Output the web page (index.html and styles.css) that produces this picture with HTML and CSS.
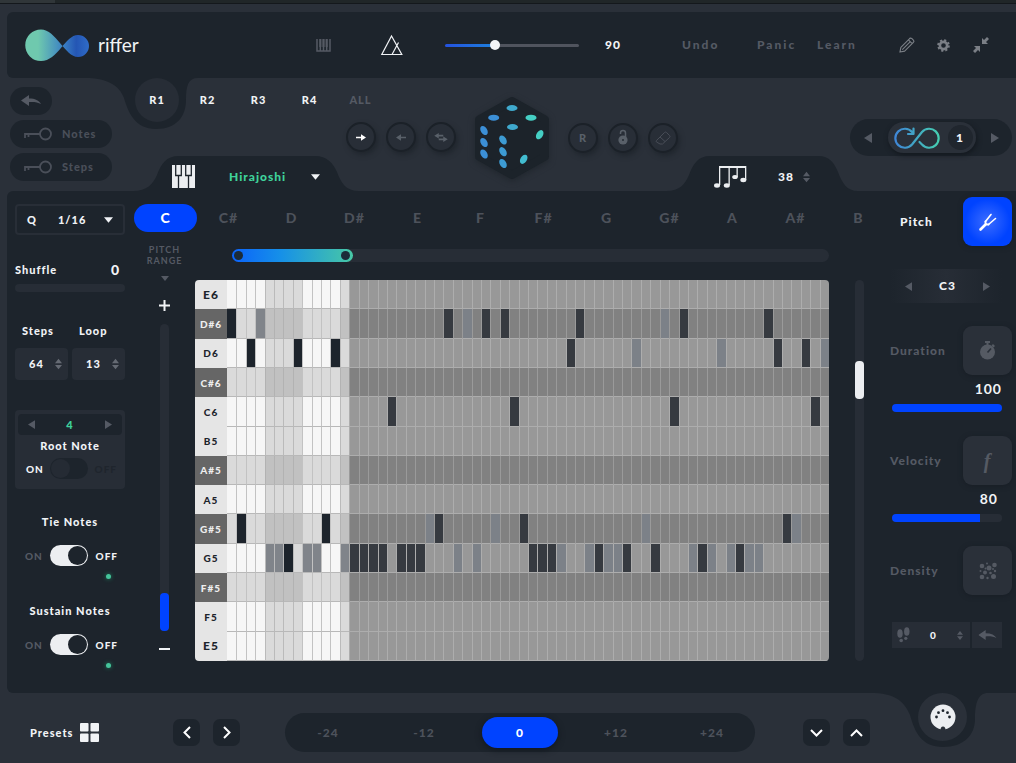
FILE: index.html
```html
<!DOCTYPE html>
<html lang="en">
<head>
<meta charset="utf-8">
<title>riffer</title>
<link rel="stylesheet" href="styles.css">
</head>
<body>
<svg class="defs" width="0" height="0" aria-hidden="true">
  <defs>
    <linearGradient id="logoFill" x1="0" x2="1"><stop offset="0.2" stop-color="#6fc9ae"/><stop offset="0.6" stop-color="#3a80c4"/><stop offset="0.8" stop-color="#2456b4"/><stop offset="1" stop-color="#2f6cc8"/></linearGradient>
    <linearGradient id="loopStroke" x1="0" x2="1"><stop offset="0" stop-color="#3f86d6"/><stop offset="1" stop-color="#45cdb0"/></linearGradient>
    <symbol id="tri-left" viewBox="0 0 8 10"><path d="M8 0v10L0 5z"/></symbol>
    <symbol id="tri-right" viewBox="0 0 8 10"><path d="M0 0v10l8-5z"/></symbol>
    <symbol id="tri-down" viewBox="0 0 10 6"><path d="M0 0h10L5 6z"/></symbol>
    <symbol id="updown" viewBox="0 0 8 12"><path d="M0 5h8L4 0zM0 7h8l-4 5z"/></symbol>
    <symbol id="undo" viewBox="0 0 20 12"><path d="M0 5.500 8 0v3.500c6 0 10 2 12 5.500-3-1.800-7-2.300-12-2V11z"/></symbol>
    <symbol id="key" viewBox="0 0 28 14"><g fill="none" stroke="currentColor" stroke-width="1.800"><circle cx="21.500" cy="7" r="5.500"/><path d="M16 7H1v4M4.500 7v3"/></g></symbol>
  </defs>
</svg>

<div class="strip"><span class="strip-tab"></span></div>

<header class="topbar">
  <div class="brand">
    <svg width="65" height="33" viewBox="0 0 65 33"><path fill="url(#logoFill)" d="M16 .5A15.700 15.700 0 1 0 16 32C33 32 40 6 53 6A11 11 0 0 1 53 28C40 28 31 .5 16 .5z"/></svg>
    <span class="brand-name">riffer</span>
  </div>
  <button class="icon dim" aria-label="Keyboard"><svg width="15" height="13" viewBox="0 0 15 13" fill="none" stroke="currentColor" stroke-width="1.500"><path d="M1 0v12h13V0M4.300 0v12M7.500 0v12M10.700 0v12"/><path stroke-width="2.500" d="M4.300 0v8M7.500 0v8M10.700 0v8" opacity=".7"/></svg></button>
  <button class="icon lit" aria-label="Metronome"><svg width="22" height="21" viewBox="0 0 22 21" fill="none" stroke="currentColor" stroke-width="1.200"><path d="M10.500 1 .8 19.500h20zM11 19.500 17.500 7.500"/></svg></button>
  <input class="tempo" type="range" min="0" max="100" value="36" aria-label="Tempo">
  <output class="tempo-value">90</output>
  <button class="menu">Undo</button>
  <button class="menu">Panic</button>
  <button class="menu">Learn</button>
  <button class="icon tool" aria-label="Edit"><svg width="16" height="16" viewBox="0 0 17 17" fill="none" stroke="currentColor" stroke-width="1.200" stroke-linejoin="round"><path d="m1 16 1-5 9-9q1-1.500 2.500-.5l2 2q1 1-.5 2.500l-9 9zM10 3l4 4M3.500 13.500l8-8"/></svg></button>
  <button class="icon tool" aria-label="Settings"><svg width="13" height="13" viewBox="-7 -7 14 14" fill="none" stroke="currentColor"><circle r="3.900" stroke-width="2.800"/><circle r="5.800" stroke-width="2" stroke-dasharray="2.300 2.255"/></svg></button>
  <button class="icon tool" aria-label="Collapse"><svg width="16" height="16" viewBox="0 0 16 16" fill="currentColor"><path d="M1 9h6v6l-2-2-3 3-2-2 3-3zM15 7H9V1l2 2 3-3 2 2-3 3z"/></svg></button>
</header>

<section class="deck">
  <div class="locks">
    <button class="pill short" aria-label="Back"><svg width="20" height="12" fill="currentColor"><use href="#undo"/></svg></button>
    <button class="pill"><svg width="28" height="14"><use href="#key"/></svg>Notes</button>
    <button class="pill"><svg width="28" height="14"><use href="#key"/></svg>Steps</button>
  </div>

  <div class="deck-left">
    <nav class="riffs">
      <svg class="notch" width="114" height="52" viewBox="0 0 114 52"><path d="M0 0C22 0 34 7 39 20 43 34 50 51 71 51S101 38 101 22C101 8 103 0 113 0z"/></svg>
      <button class="riff on">R1</button><button class="riff">R2</button><button class="riff">R3</button><button class="riff">R4</button><button class="riff all">ALL</button>
    </nav>
    <div class="directions">
      <button class="round lit" aria-label="Forward"><svg width="10" height="7" viewBox="0 0 12 8" fill="currentColor"><path d="M0 3h6V0l6 4-6 4V5H0z"/></svg></button>
      <button class="round" aria-label="Backward"><svg width="10" height="7" viewBox="0 0 12 8" fill="currentColor"><path d="M12 3H6V0L0 4l6 4V5h6z"/></svg></button>
      <button class="round" aria-label="Both ways"><svg width="14" height="9" viewBox="0 0 15 10" fill="currentColor"><path d="M0 3 5 0v2h5v2H5v2zM15 7l-5 3V8H5V6h5V4z"/></svg></button>
    </div>
    <div class="tab scale-tab">
      <svg class="tab-shape" width="226" height="36" viewBox="0 0 226 36"><path d="M0 36V35C14 35 20 28 24 19 28 8 33 0 46 0H182C194 0 200 7 204 16 208 27 213 35 226 35v1z"/></svg>
      <svg width="23" height="23" viewBox="0 0 23 23"><path fill="#eceef1" d="M0 0h23v23H0z"/><path fill="none" stroke="#1d242c" stroke-width="1.300" d="M3.700 0v10.500h5.600V0M13.700 0v10.500h5.600V0M6.500 10.500V23M16.500 10.500V23"/></svg>
      <select class="scale-select" aria-label="Scale"><option>Hirajoshi</option></select>
      <svg class="lit" width="9" height="6" fill="currentColor"><use href="#tri-down"/></svg>
    </div>
  </div>

  <button class="dice" aria-label="Randomize">
    <svg width="74" height="82" viewBox="0 0 74 82">
      <path d="M37 4 70 22.500v37L37 78 4 59.500v-37z" fill="#1c232a" stroke="#1c232a" stroke-width="8" stroke-linejoin="round"/>
      <g fill="#3fa9cd"><ellipse cx="37" cy="11" rx="5.500" ry="3"/><ellipse cx="37.500" cy="30" rx="5.500" ry="3"/><ellipse cx="48.700" cy="62.300" rx="3.200" ry="5" transform="rotate(32 48.700 62.300)" fill="#42bcd0"/></g>
      <g fill="#3c8fd6"><ellipse cx="18.700" cy="20.700" rx="5.500" ry="3"/><ellipse cx="9" cy="33.500" rx="3.200" ry="5" transform="rotate(-32 9 33.500)"/><ellipse cx="9" cy="45.500" rx="3.200" ry="5" transform="rotate(-32 9 45.500)"/><ellipse cx="9" cy="57" rx="3.200" ry="5" transform="rotate(-32 9 57)"/></g>
      <g fill="#3d9bd3"><ellipse cx="28" cy="43" rx="3.200" ry="5" transform="rotate(-32 28 43)"/><ellipse cx="28" cy="54.700" rx="3.200" ry="5" transform="rotate(-32 28 54.700)"/><ellipse cx="28" cy="66.500" rx="3.200" ry="5" transform="rotate(-32 28 66.500)"/></g>
      <g fill="#45cfc4"><ellipse cx="56" cy="20.700" rx="5.500" ry="3"/><ellipse cx="64.700" cy="37.700" rx="3.200" ry="5" transform="rotate(32 64.700 37.700)"/></g>
    </svg>
  </button>

  <div class="deck-right">
    <div class="deck-tools">
      <button class="round">R</button>
      <button class="round" aria-label="Lock"><svg width="10" height="15" viewBox="0 0 10 15"><path d="M2.500 4V3a2.500 2.500 0 0 1 5 0v4" fill="none" stroke="currentColor" stroke-width="1.500"/><circle cx="5" cy="10" r="4.600" fill="currentColor"/><circle cx="5" cy="10" r="1" fill="#262c35"/></svg></button>
      <button class="round faint" aria-label="Erase"><svg width="16" height="14" viewBox="0 0 16 14" fill="none" stroke="currentColor"><path d="M1.500 9.500 9.500 1.500q1-1 2 0l3 3q1 1 0 2l-7 6.500H5l-3.500-2q-.7-.7 0-1.500zM5 6l5 4.500"/></svg></button>
      <div class="looper">
        <button class="icon" aria-label="Previous loop"><svg width="8" height="10" fill="currentColor"><use href="#tri-left"/></svg></button>
        <button class="loop-core"><svg width="46" height="22" viewBox="0 0 46 22" fill="none" stroke="url(#loopStroke)" stroke-width="2.200" stroke-linecap="round" stroke-linejoin="round"><path d="M18 5A9.500 9.500 0 1 0 18 17.500L28 5A9.500 9.500 0 1 1 28 17.500L25.500 15M14 7h5.500V1.500"/></svg><span class="loop-count">1</span></button>
        <button class="icon" aria-label="Next loop"><svg width="8" height="10" fill="currentColor"><use href="#tri-right"/></svg></button>
      </div>
    </div>
    <div class="tab riff-tab">
      <svg class="tab-shape" width="192" height="36" viewBox="0 0 192 36"><path d="M0 36V35C14 35 19 28 23 19 27 8 32 0 44 0H152C164 0 168 7 172 16 176 27 181 35 192 35v1z"/></svg>
      <svg width="33" height="22" viewBox="0 0 33 22" fill="#eceef1"><path d="M5 0h27v2H5zM5 0h1.300v19H5zM14.500 0h1.300v19h-1.300zM22.500 0h1.300v11h-1.300zM31 0h1.300v14H31z"/><ellipse cx="3" cy="19.500" rx="3" ry="2.200"/><ellipse cx="12.800" cy="19.500" rx="3" ry="2.200"/><ellipse cx="21" cy="11" rx="2.800" ry="2"/><ellipse cx="29.300" cy="14" rx="3" ry="2.200"/></svg>
      <span class="riff-count">38</span>
      <button class="icon" aria-label="Change riff length"><svg width="7" height="12" fill="currentColor"><use href="#updown"/></svg></button>
    </div>
  </div>
</section>

<main class="panel">
  <aside class="left">
    <label class="quant">Q<select><option>1/16</option></select><svg width="9" height="6" fill="currentColor"><use href="#tri-down"/></svg></label>
    <div class="shuffle">
      <label for="shuffle">Shuffle</label><output>0</output>
      <input id="shuffle" class="bar" type="range" min="0" max="100" value="0">
    </div>
    <div class="counts">
      <label for="steps">Steps</label><label for="loop">Loop</label>
      <div class="spin"><input id="steps" value="64"><svg width="7" height="12" fill="currentColor"><use href="#updown"/></svg></div>
      <div class="spin"><input id="loop" value="13"><svg width="7" height="12" fill="currentColor"><use href="#updown"/></svg></div>
    </div>
    <div class="root">
      <div class="root-step"><button class="icon" aria-label="Lower"><svg width="7" height="9" fill="currentColor"><use href="#tri-left"/></svg></button><span>4</span><button class="icon" aria-label="Higher"><svg width="7" height="9" fill="currentColor"><use href="#tri-right"/></svg></button></div>
      <label for="root">Root Note</label>
      <div class="switch-row"><span class="small lit">ON</span><input id="root" class="switch muted" type="checkbox"><span class="small faint">OFF</span></div>
    </div>
    <div class="toggle">
      <label for="tie">Tie Notes</label>
      <div class="switch-row"><span class="small">ON</span><input id="tie" class="switch" type="checkbox" checked><span class="small lit">OFF</span></div>
      <i class="led"></i>
    </div>
    <div class="toggle">
      <label for="sustain">Sustain Notes</label>
      <div class="switch-row"><span class="small">ON</span><input id="sustain" class="switch" type="checkbox" checked><span class="small lit">OFF</span></div>
      <i class="led"></i>
    </div>
  </aside>

  <section class="center">
    <div class="roots">
      <button class="on">C</button><button>C#</button><button>D</button><button>D#</button><button>E</button><button>F</button><button>F#</button><button>G</button><button>G#</button><button>A</button><button>A#</button><button>B</button>
    </div>
    <div class="pitch-range">
      <span class="caption">PITCH RANGE</span>
      <svg width="8" height="5" viewBox="0 0 10 6" fill="currentColor"><path d="M0 0h10L5 6z"/></svg>
      <button class="icon lit plus" aria-label="Zoom in"><svg width="11" height="11" viewBox="0 0 11 11" stroke="currentColor" stroke-width="2"><path d="M0 5.500h11M5.500 0v11"/></svg></button>
      <input class="vertical blue" type="range" min="0" max="100" value="0" aria-label="Pitch range">
      <button class="icon lit minus" aria-label="Zoom out"><svg width="11" height="2" viewBox="0 0 11 2" stroke="currentColor" stroke-width="2"><path d="M0 1h11"/></svg></button>
    </div>
    <div class="stage">
      <div class="window">
        <div class="window-fill"></div>
        <input type="range" min="0" max="1000" value="0" aria-label="Loop start">
        <input type="range" min="0" max="1000" value="184" aria-label="Loop end">
      </div>
      <div class="roll" id="roll"></div>
    </div>
    <div class="scroller"><input class="vertical white" type="range" min="0" max="1000" value="764" aria-label="Scroll notes"></div>
  </section>

  <aside class="right">
    <div class="param lit"><span>Pitch</span><button class="tile on" aria-label="Pitch"><svg width="20" height="20" viewBox="0 0 20 20" fill="none" stroke="#fff" stroke-linecap="round"><path stroke-width="1.600" d="M7.500 9.500 13 2.500M10.500 12.500 17.500 6.500"/><path stroke-width="2" d="M7.500 9.500q-.6 3.600 3 3"/><path stroke-width="2.600" d="M7.500 12.500 2.500 17.500"/></svg></button></div>
    <div class="octave"><button class="icon" aria-label="Lower"><svg width="7" height="9" fill="currentColor"><use href="#tri-left"/></svg></button><span>C3</span><button class="icon" aria-label="Higher"><svg width="7" height="9" fill="currentColor"><use href="#tri-right"/></svg></button></div>
    <div class="block">
      <div class="param"><label for="duration">Duration</label><button class="tile" aria-label="Duration"><svg width="17" height="19" viewBox="0 0 17 19"><circle cx="8.500" cy="11" r="7.500" fill="currentColor"/><path d="M6 0h5v2H6zM7.500 1h2v3h-2zM14 3l2 2-1.500 1.500-2-2z" fill="currentColor"/><path d="m8.500 11.500 3.500-4" stroke="#2a3039" stroke-width="1.600"/></svg></button></div>
      <output>100</output>
      <input id="duration" class="bar full" type="range" min="0" max="100" value="100">
    </div>
    <div class="block">
      <div class="param"><label for="velocity">Velocity</label><button class="tile forte">f</button></div>
      <output class="inset">80</output>
      <input id="velocity" class="bar eighty" type="range" min="0" max="100" value="80">
    </div>
    <div class="param"><span>Density</span><button class="tile" aria-label="Density"><svg width="18" height="18" viewBox="0 0 18 18" fill="currentColor"><circle cx="3" cy="4" r="2.300"/><circle cx="10" cy="6" r="2.500"/><circle cx="15.500" cy="3" r="2.300"/><circle cx="6" cy="10.500" r="2"/><circle cx="3" cy="15" r="2.300"/><circle cx="14.500" cy="14.500" r="2.500"/><circle cx="8" cy="1.500" r="1"/><circle cx="11.500" cy="11" r="1.300"/><circle cx="16" cy="9" r="1.200"/><circle cx="8.500" cy="16" r="1.200"/><circle cx="1.500" cy="9" r="1"/><circle cx="6.500" cy="6.500" r="1"/><circle cx="14" cy="7" r="1"/></svg></button></div>
    <div class="feet">
      <div class="feet-main"><svg width="13" height="16" viewBox="0 0 13 16" fill="currentColor"><ellipse cx="3" cy="6.500" rx="2.700" ry="4.300"/><ellipse cx="9.800" cy="4.500" rx="2.700" ry="4.300"/><circle cx="4.200" cy="13.500" r="1.800"/><circle cx="8.800" cy="11.300" r="1.600"/></svg><span>0</span><svg width="6" height="9" viewBox="0 0 8 12" fill="currentColor"><path d="M0 5h8L4 0zM0 7h8l-4 5z"/></svg></div>
      <button class="feet-back" aria-label="Reset"><svg width="19" height="11" viewBox="0 0 20 12" fill="currentColor"><use href="#undo"/></svg></button>
    </div>
  </aside>
</main>

<footer class="bottom">
  <button class="presets">Presets<svg width="19" height="19" viewBox="0 0 20 20" fill="currentColor"><rect width="9" height="9" rx="1"/><rect x="11" width="9" height="9" rx="1"/><rect y="11" width="9" height="9" rx="1"/><rect x="11" y="11" width="9" height="9" rx="1"/></svg></button>
  <div class="pair">
    <button class="square" aria-label="Previous"><svg width="8" height="13" viewBox="0 0 8 13"><path d="M7 1 1.500 6.500 7 12"/></svg></button>
    <button class="square" aria-label="Next"><svg width="8" height="13" viewBox="0 0 8 13"><path d="m1 1 5.500 5.500L1 12"/></svg></button>
  </div>
  <div class="transpose"><button>-24</button><button>-12</button><button class="on">0</button><button>+12</button><button>+24</button></div>
  <div class="pair">
    <button class="square" aria-label="Down"><svg width="13" height="8" viewBox="0 0 13 8"><path d="m1 1 5.500 5.500L12 1"/></svg></button>
    <button class="square" aria-label="Up"><svg width="13" height="8" viewBox="0 0 13 8"><path d="M1 7 6.500 1.500 12 7"/></svg></button>
  </div>
  <div class="midi">
    <svg class="notch" width="118" height="55" viewBox="0 0 118 55"><path d="M0 0C25 0 34 8 40 22 45 40 52 54 73 54S105 42 105 26C105 10 108 0 118 0z"/></svg>
    <button aria-label="MIDI"><svg width="26" height="26" viewBox="0 0 26 26"><circle cx="13" cy="13" r="12.500" fill="#eceef1"/><path d="M10.500 26q0-3.500 2.500-3.500t2.500 3.500z" fill="#2a3039"/><g fill="#1d242c"><circle cx="6.500" cy="13" r="1.400"/><circle cx="8.500" cy="8.700" r="1.400"/><circle cx="13" cy="6.700" r="1.400"/><circle cx="17.500" cy="8.700" r="1.400"/><circle cx="19.500" cy="13" r="1.400"/></g></svg></button>
  </div>
</footer>
<script src="roll.js"></script>
</body>
</html>
```
FILE: roll.js
```js
const STEPS = 64;
const LOOP = 13;
const rows = [
  { key: 'E6' },
  { key: 'D#6', on: [0, 23, 27, 29, 37, 48, 57], off: [3, 25, 46] },
  { key: 'D6', on: [2, 7, 11, 36, 58, 61], off: [43, 52, 63] },
  { key: 'C#6' },
  { key: 'C6', on: [17, 30, 47, 62] },
  { key: 'B5' },
  { key: 'A#5' },
  { key: 'A5' },
  { key: 'G#5', on: [1, 10, 22, 31, 59], off: [21, 28, 44, 60] },
  { key: 'G5', on: [6, 13, 14, 15, 16, 18, 19, 20, 32, 33, 34, 39, 42, 45, 50, 54],
    off: [4, 5, 8, 9, 12, 24, 26, 35, 38, 40, 41, 49, 51, 53, 55, 56] },
  { key: 'F#5' },
  { key: 'F5' },
  { key: 'E5' }
];

const roll = document.getElementById('roll');
rows.forEach(({ key, on = [], off = [] }) => {
  const row = document.createElement('div');
  row.className = 'row';
  if (key.includes('#')) row.classList.add('sharp');
  if (key[0] === 'E') row.classList.add('edge');
  const label = document.createElement('span');
  label.className = 'key';
  label.textContent = key;
  row.append(label);
  for (let step = 0; step < STEPS; step++) {
    const cell = document.createElement('i');
    cell.className = 'cell';
    if (step >= LOOP) cell.classList.add('out');
    else if (step % 8 > 3) cell.classList.add('alt');
    if (on.includes(step)) cell.classList.add('note');
    if (off.includes(step)) cell.classList.add('ghost');
    row.append(cell);
  }
  roll.append(row);
});
```
FILE: styles.css
```css
:root {
  --base: #2a3039;
  --panel: #1d242c;
  --field: #272d36;
  --dim: #555a64;
  --text: #f1f3f6;
  --blue: #0043ff;
  --green: #3fd39b;
}
* { box-sizing: border-box; }
body {
  margin: 0;
  min-height: 100vh;
  display: flex;
  flex-direction: column;
  background: var(--base);
  color: var(--text);
  font: 900 12px/16px Lato, "Open Sans", sans-serif;
  letter-spacing: 1px;
  overflow-x: hidden;
}
button, input, select, output { font: inherit; letter-spacing: inherit; color: inherit; }
button { border: 0; padding: 0; background: none; cursor: pointer; }
svg { display: block; flex: none; overflow: visible; }
.defs { position: absolute; }
.icon { display: grid; place-items: center; color: var(--dim); }
.icon.tool { color: #7b7f86; }
.icon.lit, .lit { color: var(--text); }
.notch, .tab-shape { position: absolute; fill: var(--panel); }

.strip { height: 4px; background: #202628; border-bottom: 1px solid #14181c; }
.strip-tab { display: block; width: 55px; height: 3px; background: #303639; }

.topbar {
  margin: 8px 0 0 7px;
  height: 66px;
  background: var(--panel);
  border-radius: 6px 0 0 6px;
  display: grid;
  grid-template-columns: 291fr 65fr 64fr 160fr 77fr 75fr 60fr 82fr 38fr 36fr 43fr;
  align-items: center;
  justify-items: start;
  padding-left: 18px;
}
.brand { display: flex; align-items: center; gap: 8px; }
.brand-name { font: 400 19px/24px Lato, sans-serif; letter-spacing: 0; }
.tempo { width: 134px; height: 12px; margin: 0; appearance: none; background: none; }
.tempo::-webkit-slider-runnable-track { height: 3px; border-radius: 2px; background: linear-gradient(90deg, #2452e0, #1e7fdc 36%, #50545e 36%); }
.tempo::-webkit-slider-thumb { appearance: none; width: 10px; height: 10px; margin-top: -4px; border-radius: 50%; background: #f3f4f6; }
.tempo-value { font-size: 12px; }
.menu { color: var(--dim); letter-spacing: 2px; }

.deck { height: 113px; display: grid; grid-template-columns: 119px 356fr 74px 467fr; }
.locks { display: flex; flex-direction: column; gap: 5px; padding: 9px 0 0 10px; }
.pill { width: 102px; height: 28px; border-radius: 14px; background: var(--panel); color: #4a4f59; display: flex; align-items: center; gap: 10px; padding: 0 14px; font-size: 11px; }
.pill.short { width: 42px; justify-content: center; padding: 0; color: var(--dim); }
.riffs { position: relative; height: 44px; display: flex; padding-left: 12px; }
.riffs .notch { left: -34px; top: 0; }
.riff { position: relative; width: 51px; font-size: 11px; }
.riff.on { width: 44px; height: 44px; margin: 0 3px 0 4px; border-radius: 50%; background: var(--field); }
.riff.all { color: var(--dim); }
.directions { display: flex; gap: 10px; padding-left: 227px; }
.round { width: 30px; height: 30px; border-radius: 50%; border: 2px solid #1b2128; background: #282e37; color: #596069; display: grid; place-items: center; font-size: 11px; box-shadow: 2px 3px 5px #20262d; }
.round.lit { color: #fff; }
.round.faint { color: #484d57; }
.tab { position: relative; height: 35px; margin-top: 4px; display: flex; align-items: center; padding-top: 6px; }
.tab > * { position: relative; }
.tab .tab-shape { position: absolute; top: 0; left: 0; }
.scale-tab { width: 226px; margin-left: 14px; padding-left: 39px; justify-content: flex-start; }
.scale-select { appearance: none; border: 0; background: none; color: var(--green); width: 82px; margin-left: 34px; padding: 0; font-size: 12px; }
.riff-tab { width: 192px; margin-left: 117px; padding-left: 48px; gap: 9px; }
.riff-count { margin-left: 22px; }
.dice { align-self: start; margin-top: 19px; filter: drop-shadow(0 2px 3px #20262d); }
.deck-right { padding-top: 41px; }
.deck-right .tab { margin-top: 0; }
.deck-tools { display: flex; align-items: center; gap: 10px; padding: 0 4px 0 19px; }
.looper { margin-left: auto; width: 162px; height: 37px; border-radius: 19px; background: var(--panel); display: flex; align-items: center; justify-content: space-between; padding: 0 13px 0 14px; }
.loop-core { height: 31px; width: 88px; border-radius: 16px; background: var(--base); display: flex; align-items: center; justify-content: space-between; padding: 0 3px 0 6px; box-shadow: 1px 2px 5px #13181e; }
.loop-count { width: 25px; height: 25px; border-radius: 50%; background: #20262e; line-height: 25px; }

.panel { flex: 1; margin-left: 7px; background: var(--panel); border-radius: 6px 0 0 6px; display: grid; grid-template-columns: 110px minmax(0, 1fr) 122px; padding: 0 4px 0 8px; }
.left { padding-top: 13px; font-size: 11px; }
.quant { display: flex; align-items: center; height: 31px; border: 2px solid #282e37; border-radius: 4px; padding: 0 10px; }
.quant select { appearance: none; border: 0; background: none; padding: 0; flex: 1; margin-left: 21px; min-width: 0; }
.shuffle { display: grid; grid-template-columns: 1fr auto; align-items: center; row-gap: 6px; margin-top: 27px; }
.shuffle output { font-size: 14px; padding-right: 5px; }
.bar { grid-column: 1 / -1; appearance: none; width: 100%; height: 8px; margin: 0; border-radius: 4px; background: var(--field); display: block; overflow: hidden; }
.bar::-webkit-slider-thumb { appearance: none; width: 1px; height: 8px; background: transparent; }
.bar.full { background: var(--blue); }
.bar.eighty { background: linear-gradient(90deg, var(--blue) 80%, var(--field) 80%); }
.counts { display: grid; grid-template-columns: 1fr 1fr; gap: 9px 4px; margin-top: 31px; }
.counts label { padding-left: 7px; }
.spin { height: 32px; border-radius: 4px; background: var(--field); display: flex; align-items: center; justify-content: space-between; padding: 0 6px 0 14px; color: #656a73; }
.spin input { width: 26px; padding: 0; border: 0; background: none; color: var(--text); }
.root { margin-top: 30px; height: 79px; padding: 4px 3px; border-radius: 4px; background: var(--field); text-align: center; }
.root-step { height: 21px; padding: 0 10px; border-radius: 4px; background: var(--panel); color: var(--green); display: flex; align-items: center; justify-content: space-between; }
.root label, .toggle label { display: block; text-align: center; }
.root label { padding: 3px 0 4px; }
.root .switch-row { padding: 0 5px 0 8px; }
.switch-row { display: flex; align-items: center; justify-content: space-between; padding: 0 7px 0 10px; }
.small { font-size: 10px; color: var(--dim); }
.small.lit { color: var(--text); }
.small.faint { color: #1f252d; }
.switch { appearance: none; width: 38px; height: 21px; margin: 0; border-radius: 11px; background: #eceef1; display: flex; align-items: center; padding: 1px; }
.switch::before { content: ""; width: 19px; height: 19px; border-radius: 50%; background: var(--panel); }
.switch:checked { justify-content: flex-end; }
.switch.muted { background: var(--panel); }
.switch.muted::before { background: #252b34; }
.toggle { margin-top: 25px; display: flow-root; }
.toggle + .toggle { margin-top: 24px; }
.toggle .switch-row { margin-top: 15px; }
.led { display: block; width: 5px; height: 5px; margin: 8px 14px 0 auto; border-radius: 50%; background: #45c49b; box-shadow: 0 0 4px #1c8a63; }

.center { padding: 13px 0 32px 9px; display: grid; grid-template-columns: 61px minmax(0, 1fr) 61px; grid-template-rows: 28px 1fr; }
.roots { grid-column: 1 / -1; display: grid; grid-template-columns: repeat(12, 1fr); }
.roots button { color: #4d525b; font-size: 14px; border-radius: 14px; }
.roots .on { background: var(--blue); color: #fff; }
.pitch-range { display: flex; flex-direction: column; align-items: center; color: var(--dim); padding-top: 12px; }
.caption { width: 48px; font-size: 9px; line-height: 11px; font-weight: 700; text-align: center; margin-bottom: 10px; }
.plus { margin-top: 19px; height: 11px; }
.minus { height: 2px; margin: 17px 0 11px; }
.vertical { appearance: none; writing-mode: vertical-lr; direction: rtl; width: 9px; height: auto; margin: 0; border-radius: 5px; background: var(--field); }
.vertical::-webkit-slider-thumb { appearance: none; width: 9px; height: 38px; border-radius: 4px; background: #eceef1; }
.pitch-range .vertical { margin-top: 13px; flex: 1; min-height: 0; }
.blue::-webkit-slider-thumb { background: var(--blue); }
.scroller { display: flex; justify-content: center; padding-top: 48px; }
.stage { display: flex; flex-direction: column; padding-top: 17px; gap: 18px; }
.window { margin-left: 37px; height: 13px; border-radius: 7px; background: var(--field); display: grid; }
.window > * { grid-area: 1 / 1; }
.window-fill { width: calc(20% + 2px); border-radius: 7px; background: linear-gradient(90deg, #0b63fb, #1690e8 40%, #48c8a5); }
.window input { appearance: none; width: 100%; height: 13px; margin: 0; padding: 0 2px; background: none; pointer-events: none; }
.window input::-webkit-slider-thumb { appearance: none; width: 9px; height: 9px; border-radius: 50%; background: #1c2b38; pointer-events: auto; }
.roll { flex: 1; display: grid; grid-template-rows: repeat(13, 1fr); border-radius: 4px; overflow: hidden; }
.row { display: grid; grid-template-columns: 32px repeat(64, minmax(0, 1fr)); }
.key { background: #e5e5e5; color: #1d242c; font-size: 10px; display: grid; place-items: center; line-height: 12px; }
.edge .key { font-size: 12px; }
.sharp .key { background: #666; color: #eee; }
.cell { background: #f6f6f6; border-left: 1px solid #c2c2c2; border-bottom: 1px solid #b8b8b8; }
.cell.alt { background: #dadada; border-left-color: #bababa; }
.cell.out { background: #989898; border-color: #adadad; }
.sharp .cell { background: #dadada; }
.sharp .cell.alt { background: #c1c1c1; border-left-color: #b2b2b2; }
.sharp .cell.out { background: #818181; border-left-color: #9a9a9a; }
.key + .cell { border-left-width: 0; }
.row .cell.ghost { background: #80848a; }
.row .cell.ghost.out { background: #7c8188; }
.row .cell.note { background: #1d242c; }
.row .cell.note.out { background: #363a40; }

.right { padding-top: 6px; color: var(--dim); }
.param { display: flex; align-items: center; justify-content: space-between; }
.param.lit { padding-left: 10px; }
.tile { width: 49px; height: 49px; border-radius: 9px; background: var(--base); color: #555a63; display: grid; place-items: center; box-shadow: 0 1px 5px #181e25; }
.tile.on { background: radial-gradient(#3b6cff, var(--blue) 65%); }
.forte { font: italic 700 20px/20px "Liberation Serif", serif; }
.octave { margin: 23px 10px 23px 0; height: 34px; padding: 0 12px 0 15px; display: flex; align-items: center; justify-content: space-between; color: var(--text); font-size: 12px; background: linear-gradient(90deg, transparent, var(--field) 50%, transparent); }
.block { margin-bottom: 24px; }
.block output { display: block; margin: 6px 10px; color: var(--text); font-size: 14px; font-weight: 700; text-align: right; }
.block .inset { margin-right: 14px; }
.block .bar { width: 110px; margin: 7px 0 0 2px; }
.feet { display: flex; gap: 2px; margin: 27px 10px 0 2px; height: 26px; }
.feet > * { background: var(--field); }
.feet-main { flex: 1; display: flex; align-items: center; justify-content: space-between; padding: 0 7px 0 5px; font-size: 10px; }
.feet-main span { color: var(--text); }
.feet-back { width: 30px; display: grid; place-items: center; color: var(--dim); }

.bottom { height: 70px; display: grid; grid-template-columns: 143fr 67px 45fr 470px 48fr 67px 48fr 49px 49fr; align-items: center; padding: 9px 0 0 30px; }
.presets { display: flex; align-items: center; gap: 7px; font-size: 11px; }
.pair { display: flex; gap: 13px; }
.square { width: 27px; height: 27px; border-radius: 7px; background: var(--panel); display: grid; place-items: center; }
.square path { fill: none; stroke: #fff; stroke-width: 2; }
.transpose { grid-column: 4; height: 39px; border-radius: 20px; background: var(--panel); display: grid; grid-template-columns: repeat(5, 76px); justify-content: space-between; padding: 4px 5px; }
.transpose button { color: #4d525b; border-radius: 16px; }
.transpose .on { background: var(--blue); color: #fff; box-shadow: 0 2px 6px #12181f; }
.transpose + .pair { grid-column: 6; }
.midi { grid-column: 8; position: relative; align-self: start; height: 0; }
.midi .notch { left: -48px; top: -9px; }
.midi button { position: relative; margin-top: -9px; width: 49px; height: 48px; border-radius: 50%; background: var(--base); display: grid; place-items: center; }
```
